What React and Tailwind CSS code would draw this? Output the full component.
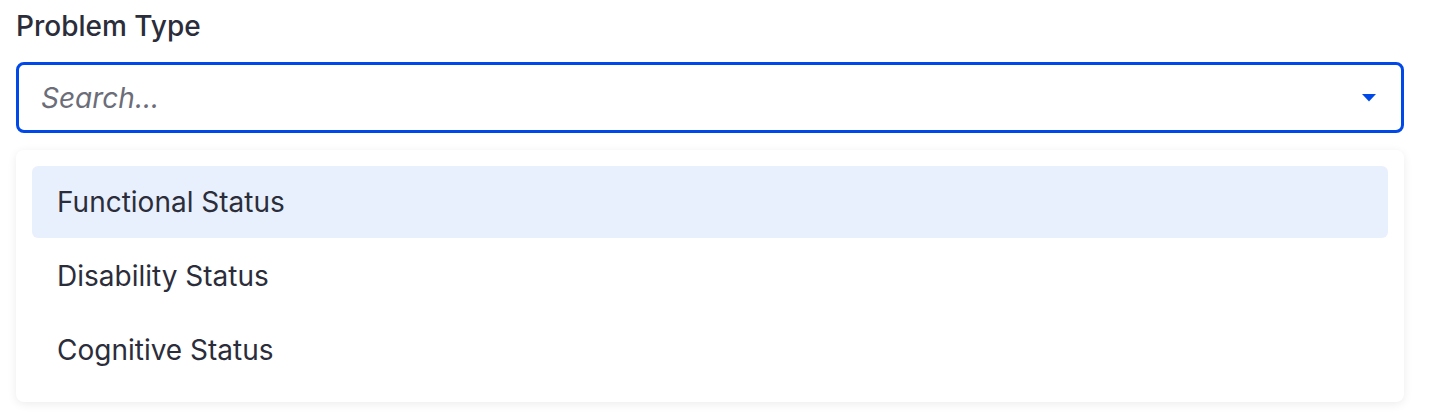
import { useState } from 'react'

const options = ['Functional Status', 'Disability Status', 'Cognitive Status']

export default function App() {
  const [active, setActive] = useState(0)

  return (
    <div className="min-h-[418px] bg-white pl-4 pr-7 pt-[9px] font-['Inter',sans-serif] text-[#2b2d3b]">
      <label className="block text-[28px] leading-[34px] font-medium">Problem Type</label>

      {/* Search field */}
      <div className="mt-[19px] flex h-[71px] items-center rounded-lg border-[3px] border-[#0048e8] pl-[22px] pr-[25px]">
        <input
          autoFocus
          placeholder="Search..."
          className="flex-1 bg-transparent text-[28px] outline-none caret-[#2b2d3b] placeholder:italic placeholder:text-[#6b6d78]"
        />
        <svg width="14" height="8" viewBox="0 0 14 8" className="text-[#0048e8]">
          <path d="M0 0h14L7 7.5z" fill="currentColor" />
        </svg>
      </div>

      {/* Options */}
      <ul className="mt-[17px] flex flex-col gap-[2px] rounded-lg bg-white p-4 shadow-[0_2px_10px_rgba(0,0,0,0.08)]">
        {options.map((o, i) => (
          <li
            key={o}
            onMouseEnter={() => setActive(i)}
            className={`flex h-[72px] items-center rounded-md px-[25px] text-[28px] ${
              active === i ? 'bg-[#e9f0fd]' : ''
            }`}
          >
            {o}
          </li>
        ))}
      </ul>
    </div>
  )
}
